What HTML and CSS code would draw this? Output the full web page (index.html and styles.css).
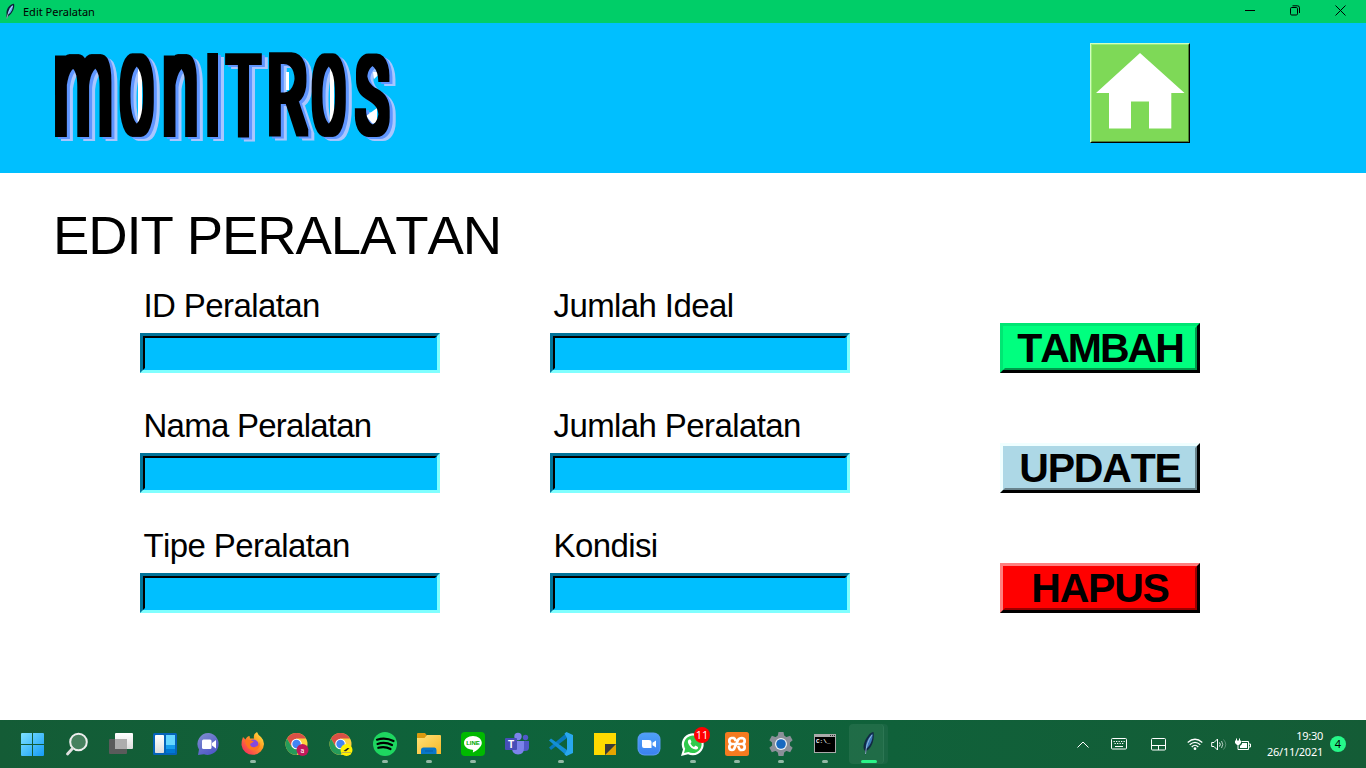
FILE: index.html
```html
<!DOCTYPE html>
<html lang="id">
<head>
<meta charset="utf-8">
<title>Edit Peralatan</title>
<link rel="stylesheet" href="styles.css">
</head>
<body>
<div class="window">
  <div class="titlebar">
    <svg class="feather" width="10" height="17" viewBox="0 0 10 17"><path d="M1.600 16 1.500 11C1 6 5 1 9 .8 10 4 8 10 3.500 13Z" fill="#0c2036"/><path d="M3 10.500C3.500 6.500 5.500 3.500 8 2 8 6 6.500 9 4 11Z" fill="#67a8ef"/><path d="M1.800 15.500C3 10 5 6 7.500 3" stroke="#dceaff" stroke-width=".7" fill="none"/></svg>
    <span class="title">Edit Peralatan</span>
    <div class="controls">
      <svg width="10" height="11" viewBox="0 0 10 11"><path d="M0 5.500H10" stroke="#000"/></svg>
      <svg width="10" height="11" viewBox="0 0 10 11" fill="none" stroke="#000"><rect x=".5" y="2.500" width="7" height="7.500" rx="1.200"/><path d="M2.500 .8H7.500Q9.500 .8 9.500 2.800V8"/></svg>
      <svg width="11" height="11" viewBox="0 0 11 11"><path d="M.5.5 10.500 10.500M10.500.5 .5 10.500" stroke="#000"/></svg>
    </div>
  </div>
  <header class="header">
    <svg class="logo" width="350" height="100" viewBox="50 47 350 100" role="img" aria-label="MONITROS">
      <defs>
        <filter id="heavy" filterUnits="userSpaceOnUse" x="40" y="40" width="370" height="110" color-interpolation-filters="sRGB"><feMorphology operator="dilate" radius="4 3"/></filter>
        <g id="word" filter="url(#heavy)">
          <text transform="translate(54.300 134.300) scale(.652 1.430)">m</text>
          <text transform="translate(120.800 133.300) scale(.472 1.060)">O</text>
          <text transform="translate(163 134.300) scale(.627 1.430)">n</text>
          <text transform="translate(206.400 134.300) scale(.460 1.090)">I</text>
          <text transform="translate(227.800 134.300) scale(.526 1.090)">T</text>
          <text transform="translate(267.400 134.300) scale(.623 1.090)">R</text>
          <text transform="translate(312.800 133.300) scale(.472 1.060)">O</text>
          <text transform="translate(356.600 133.300) scale(.528 1.060)">S</text>
        </g>
      </defs>
      <use href="#word" x="6" y="4" fill="#a9c6ff"/>
      <use href="#word" x="3" y="2" fill="#5f95ff"/>
      <g fill="#fff"><rect x="138" y="67" width="4" height="57"/><rect x="286" y="72" width="3" height="18"/><rect x="330" y="67" width="4" height="57"/><path d="M373 72H378L386 68 374 79ZM366 116 377 108V123H372Z"/></g>
      <use href="#word" fill="#000"/>
    </svg>
    <button class="home" aria-label="Home"><span class="home-face"><svg width="96" height="96" viewBox="1092 45 96 96"><path fill="#fff" d="M1140 53 1184.500 93H1171.300V128.500H1149V101.500H1131V128.500H1109V93H1096Z"/></svg></span></button>
  </header>
  <main class="content">
    <h1>EDIT PERALATAN</h1>
    <div class="form">
      <label class="field">ID Peralatan<span class="entry"></span></label>
      <label class="field">Jumlah Ideal<span class="entry"></span></label>
      <button class="btn add"><span>TAMBAH</span></button>
      <label class="field name">Nama Peralatan<span class="entry"></span></label>
      <label class="field">Jumlah Peralatan<span class="entry"></span></label>
      <button class="btn update"><span>UPDATE</span></button>
      <label class="field">Tipe Peralatan<span class="entry"></span></label>
      <label class="field">Kondisi<span class="entry"></span></label>
      <button class="btn delete"><span>HAPUS</span></button>
    </div>
  </main>
</div>
<footer class="taskbar">
  <svg width="0" height="0" class="defs"><defs>
    <linearGradient id="win" x2="1" y2="1"><stop stop-color="#7ee2ff"/><stop offset="1" stop-color="#159cf5"/></linearGradient>
    <linearGradient id="gray" x2="0" y2="1"><stop stop-color="#fff"/><stop offset="1" stop-color="#ddd"/></linearGradient>
    <linearGradient id="chat" x2=".6" y2="1"><stop stop-color="#8290cf"/><stop offset="1" stop-color="#5059c9"/></linearGradient>
    <linearGradient id="fox" x1="1" x2="0" y2="1"><stop stop-color="#fff44f"/><stop offset=".4" stop-color="#ff9a20"/><stop offset="1" stop-color="#f5156c"/></linearGradient>
    <linearGradient id="fold" x2="1" y2="1"><stop stop-color="#ffe27a"/><stop offset="1" stop-color="#f8b826"/></linearGradient>
    <linearGradient id="zoomy" x2="0" y2="1"><stop stop-color="#4ea0f8"/><stop offset="1" stop-color="#3b82f0"/></linearGradient>
    <g id="chrome"><circle cx="11.500" cy="12" r="11" fill="#ffd23e"/><path d="M2 6.500A11 11 0 0 1 21 6.500H11.500L6.700 14.700Z" fill="#d95046"/><path d="M2 6.500A11 11 0 0 0 11.500 23L16.200 14.800 11.500 17 6.700 14.700Z" fill="#259b5a"/><circle cx="11.500" cy="12" r="5.300" fill="#fff"/><circle cx="11.500" cy="12" r="4.200" fill="#4285f4"/></g>
  </defs></svg>
  <div class="apps">
    <div class="app"><svg viewBox="0 0 24 24"><path fill="url(#win)" d="M0 2Q0 1 1 1H11V12H0ZM12 1H22Q23 1 23 2V12H12ZM0 13H11V24H1Q0 24 0 23ZM12 13H23V23Q23 24 22 24H12Z"/></svg></div>
    <div class="app"><svg viewBox="0 0 24 24"><circle cx="13.500" cy="10" r="8.300" fill="#47815f" stroke="#eee" stroke-width="2"/><path d="M7.500 16.500 2.500 22" stroke="#e0e0e0" stroke-width="2.800" stroke-linecap="round"/></svg></div>
    <div class="app"><svg viewBox="0 0 24 24"><rect x="6" y="1" width="18" height="16" rx="1" fill="url(#gray)"/><rect y="7" width="18" height="15" rx="1" fill="#5a5b5b"/><path d="M6 7H18V17H6Z" fill="#adadad"/></svg></div>
    <div class="app"><svg viewBox="0 0 24 24"><rect y="1" width="24" height="22" rx="1.500" fill="#0563b9"/><rect x="2" y="3" width="9" height="18" rx=".8" fill="url(#gray)"/><path fill="#66d7ff" d="M13 3h9v10h-9z"/><path fill="#159dec" d="M13 13h9v4h-9z"/><path fill="#0078d4" d="M13 17h9v4h-9z"/></svg></div>
    <div class="app"><svg viewBox="0 0 24 24"><path d="M12 1A11 11 0 1 1 7 22.300L1 23 2 17.500A11 11 0 0 1 12 1Z" fill="url(#chat)"/><rect x="5" y="7.500" width="9.500" height="9.500" rx="1.500" fill="#fff"/><path d="m15 11 4-3v8.500l-4-3z" fill="#fff"/></svg></div>
    <div class="app run"><svg viewBox="0 0 24 24"><path d="M2 5 4.500 7.500Q6 4 8.500 4L9 6.500 13 6.500Q12 2 16 0 17 3 20 5 23 8 23 12A11.300 11.300 0 0 1 .5 13Q.5 8 2 5Z" fill="url(#fox)"/><circle cx="12.500" cy="12.500" r="5" fill="#8548df"/><path d="M4 8Q9 7 13 9.500L9 12Q10 16 14 15 18 14 18 10 20 14 17 17 12 20 7 16Q4 12 4 8Z" fill="#ff751d"/></svg></div>
    <div class="app"><svg viewBox="0 0 24 24"><use href="#chrome"/><circle cx="17.500" cy="18" r="6" fill="#c2185b"/><text x="17.500" y="20.500" class="avatar">a</text></svg></div>
    <div class="app"><svg viewBox="0 0 24 24"><use href="#chrome"/><circle cx="17.500" cy="18" r="6" fill="#fff200"/><path d="m14.500 19 4-3 2 .2-3.500 3z" fill="#222"/><path d="M13 20.500h9" stroke="#888" stroke-width=".6"/></svg></div>
    <div class="app run"><svg viewBox="0 0 24 24"><circle cx="12" cy="12" r="12" fill="#1ed760"/><path d="M4 7.700Q12.500 5 20.500 9M4.500 12Q12 9.500 19 13M5.300 15.800Q12 14 17.500 17" fill="none" stroke="#000" stroke-width="2.200" stroke-linecap="round"/></svg></div>
    <div class="app run"><svg viewBox="0 0 24 24"><path d="M0 2Q0 1 1 1H8L10 3.500V7H0Z" fill="#dc9a0f"/><path d="M0 6H7.500L10 3H23Q24 3 24 4V22H0Z" fill="url(#fold)"/><path d="M4 22V18Q4 15.500 6.500 15.500H17.500Q19.500 15.500 19.500 18V22Z" fill="#0877c9"/><path d="M8 19h8" stroke="#075da5"/></svg></div>
    <div class="app run"><svg viewBox="0 0 24 24"><rect width="24" height="24" rx="4" fill="#00b900"/><path d="M12 4C17 4 20.800 7 20.800 11 20.800 15 15 19 12 20.500 11.500 20 13 18 11.500 17.800 6.500 17.500 3 14.500 3 11 3 7 7 4 12 4Z" fill="#fff"/><text x="12" y="13" class="line-label">LINE</text></svg></div>
    <div class="app"><svg viewBox="0 0 24 24"><circle cx="20.500" cy="5.500" r="2.700" fill="#5059c9"/><circle cx="13" cy="4.500" r="3.700" fill="#7b83eb"/><path d="M16 9H24V15.500Q24 19 20 19H16Z" fill="#5059c9"/><path d="M7 9H19V16Q19 22.500 13 22.500 7 22 7 16Z" fill="#7b83eb"/><rect y="6" width="12" height="12" rx="1" fill="#464eb8"/><text x="6" y="15.500" class="teams-label">T</text></svg></div>
    <div class="app run"><svg viewBox="0 0 24 24"><path d="M17.500 1 0 15.500 2 18 18 6Z" fill="#0879bd"/><path d="M17.500 23.500 0 8.500 2 6.500 18 18Z" fill="#148fd6"/><path d="M17.500 0 24 3V21L17.500 24 15.500 22.500 18 18V6L15.500 1.500Z" fill="#29a8ef"/></svg></div>
    <div class="app"><svg viewBox="0 0 24 24"><path d="M1 1H23V12L12 23H1Z" fill="#ffda00"/><path d="M12 23H23V12Z" fill="#e5a500"/><path d="M12 12H23L12 23Z" fill="#3b3a38"/></svg></div>
    <div class="app"><svg viewBox="0 0 24 24"><rect x=".5" y=".5" width="23" height="23" rx="7" fill="#599aef"/><rect x="1.500" y="1.500" width="21" height="21" rx="6" fill="url(#zoomy)"/><path d="M5 8H12Q14.500 8 14.500 10V16H7Q5 16 5 14ZM15.500 10.800 19 8.500V15.500L15.500 13.200Z" fill="#fff"/></svg></div>
    <div class="app run"><svg viewBox="0 0 24 24"><path d="M0 24 2 17.500A11 11 0 1 1 7 22.300Z" fill="#fff"/><path d="m3 21 1.200-4.200a8.800 8.800 0 1 1 3.300 3.200z" fill="#2fca4c"/><path d="M8 7.500Q6 9 7.500 12 10 17 15 17.500 17.500 17 17 15L14.500 13.500 13 15Q10.500 14 9.500 11.500L10.500 10 9.500 7.500Z" fill="#fff"/></svg><span class="count">11</span></div>
    <div class="app run"><svg viewBox="0 0 24 24"><rect width="24" height="24" rx="2.500" fill="#f57b20"/><path d="M9.500 6H6.500Q4.300 6.200 4.300 9 4.300 11.600 7 12 4.300 12.400 4.300 15 4.300 18 7 18 9 18 9.500 16L13 8Q14 6 17 6 19.700 6.200 19.700 9 19.700 11.600 17 12 19.700 12.400 19.700 15 19.700 18 17 18H14.500M7 12H17M9 6 11 9M13 14 15 18" fill="none" stroke="#fff" stroke-width="2.700"/></svg></div>
    <div class="app run"><svg viewBox="0 0 24 24"><g fill="#8b9099"><circle cx="12" cy="12" r="9"/><path id="tooth" d="M9.500 0H14.500L15.500 5H8.500ZM9.500 24H14.500L15.500 19H8.500Z"/><use href="#tooth" transform="rotate(60 12 12)"/><use href="#tooth" transform="rotate(120 12 12)"/></g><circle cx="12" cy="12" r="6" fill="#eef3f7"/><circle cx="12" cy="12" r="4.800" fill="#1769c0"/></svg></div>
    <div class="app run"><svg viewBox="0 0 24 24"><rect x="1" y="2" width="22" height="19" fill="#aaa"/><rect x="2" y="5" width="20" height="15" fill="#000"/><path d="M17 3.500h5" stroke="#333" stroke-dasharray="1 1"/><text x="3" y="10.500" class="cmd-label">C:\_</text></svg></div>
    <div class="app active"><svg viewBox="0 0 24 24"><path d="M9 23 9 19C6 16 8 9 12 4 14 1 16 0 17.500 0 18.500 6 17 15 10.500 19Z" fill="#102944"/><path d="M10 17C9 12 12 6 16.500 1.500 17 7 15 13 10 17Z" fill="#3b76b8"/><path d="M9.500 22C10 15 12 8 16 3" stroke="#b8d5ef" stroke-width=".7" fill="none"/></svg></div>
  </div>
  <div class="tray">
    <svg class="chev" width="12" height="7" viewBox="0 0 12 7"><path d="M.5 6.500 6 1 11.500 6.500"/></svg>
    <svg class="kbd" width="16" height="12" viewBox="0 0 16 12"><rect x=".5" y=".5" width="15" height="10.500" rx="1"/><path d="M2.500 3.500H14M3.500 5.500H13" stroke-dasharray="1.300 1.200"/><path d="M4 8.500H12"/></svg>
    <svg class="pad" width="15" height="13" viewBox="0 0 15 13"><rect x=".5" y=".5" width="14" height="11.500" rx="1"/><path d="M.5 7.500H14.500M7.500 7.500V12"/></svg>
    <svg class="wifi" width="16" height="13" viewBox="0 0 16 13"><path stroke-width="1.200" d="M.7 4.500Q8-2 15.300 4.500M2.700 6.800Q8 1.800 13.300 6.800M4.700 9Q8 5.500 11.300 9"/><circle cx="8" cy="10.700" r="1.400" fill="#fff" stroke="none"/></svg>
    <svg class="vol" width="16" height="13" viewBox="0 0 16 13"><path d="M.7 4.500H3L6.500 1V12L3 8.500H.7ZM8.500 4.500Q10 6.500 8.500 8.500"/><path d="M10.500 3Q13 6.500 10.500 10" opacity=".7"/><path d="M12.500 1.500Q17 6.500 12.500 11.500" opacity=".3"/></svg>
    <svg class="bat" width="16" height="13" viewBox="0 0 16 13"><path d="M1.500 .5V3M4.500 .5V3M3 6V11.500H13.500V3.500H6.500M14 6H15.500V9H14"/><path fill="#fff" stroke="none" d="M0 2.500h6V5L4 7H2L0 5zM7 5h5v5H5V8l2-2z"/></svg>
    <div class="clock"><span>19:30</span><span>26/11/2021</span></div>
    <span class="notice">4</span>
  </div>
</footer>
</body>
</html>
```
FILE: styles.css
```css
*, *::before, *::after { box-sizing: border-box; }
body {
  margin: 0;
  width: 1366px;
  height: 768px;
  overflow: hidden;
  display: flex;
  flex-direction: column;
  background: #fff;
  color: #000;
  font-family: "Liberation Sans", Arial, sans-serif;
}
button { margin: 0; padding: 0; font-family: inherit; color: #000; }
.window { height: 720px; }

.titlebar { height: 23px; display: flex; align-items: center; padding-left: 5px; background: #00ce68; }
.title { margin-left: 8px; font: 11px/22px "Noto Sans", sans-serif; letter-spacing: 0; }
.controls { display: flex; gap: 35px; margin-left: auto; padding: 0 20px 3px 0; }

.header {
  height: 150px;
  display: flex;
  justify-content: space-between;
  align-items: flex-start;
  padding: 20px 176px 0 50px;
  background: #00bfff;
}
.logo { margin-top: 4px; font: 300 100px Roboto, sans-serif; }
.home { display: flex; width: 100px; height: 100px; border: 1px solid; border-color: #d2ffbf #000 #000 #d2ffbf; background: #7ed957; }
.home-face { display: flex; width: 98px; height: 98px; border: 1px solid; border-color: #9bea7a #4c8235 #4c8235 #9bea7a; }

.content { padding: 32px 0 0 53px; }
h1 { margin: 0; font-size: 54.500px; line-height: 62px; font-weight: 400; letter-spacing: -1.100px; font-kerning: none; }
.form {
  display: grid;
  grid-template-columns: 300px 300px 200px;
  grid-template-rows: repeat(3, 88px);
  column-gap: 110px;
  row-gap: 32px;
  padding: 18px 0 0 87px;
}
.form > :nth-child(3n) { margin-left: 40px; }
.field { display: flex; flex-direction: column; height: 88px; text-indent: 3.500px; font-size: 33px; line-height: 41px; letter-spacing: -.600px; white-space: nowrap; font-kerning: none; }
.name { letter-spacing: -.750px; }
.entry { display: block; height: 40px; margin-top: 7px; border: 3px solid; border-color: #007399 #80ffff #80ffff #007399; background: #00bfff; }
.entry::before { content: ""; display: block; height: 34px; border: 2px solid; border-color: #000 #00bfff #00bfff #000; }
.btn { display: flex; width: 200px; height: 50px; align-self: end; border: 3px solid; font-size: 41px; font-weight: 700; line-height: 40px; letter-spacing: -1.200px; font-kerning: none; }
.btn span { flex: 1; height: 44px; border: 2px solid; }
.add { background: #00ff7f; border-color: #00e673 #000 #000 #00e673; letter-spacing: -2px; }
.add span { border-color: #00ff7f #00994c #00994c #00ff7f; }
.update { background: #add8e6; border-color: #f0ffff #000 #000 #f0ffff; }
.update span { border-color: #add8e6 #68828a #68828a #add8e6; }
.delete { background: #f00; border-color: #ff8080 #000 #000 #ff8080; }
.delete span { border-color: #f00 #990000 #990000 #f00; }

.taskbar { height: 48px; display: flex; justify-content: space-between; background: linear-gradient(90deg, #145c36, #0e633b 35%, #10613a 65%, #145c36); }
.defs { position: absolute; }
.apps { display: flex; padding-left: 11px; }
.app { position: relative; width: 44px; height: 48px; padding: 12px 10px; }
.app svg { display: block; width: 24px; height: 24px; overflow: visible; }
.run::after { content: ""; position: absolute; left: 19px; bottom: 5px; width: 6px; height: 3px; border-radius: 2px; background: #91b9a5; }
.active::before { content: ""; position: absolute; inset: 4px auto 4px 2px; width: 35px; border-radius: 4px; border-right: 1px solid #2c7653; background: rgba(255,255,255,.07); box-shadow: 4px 0 0 #1a6643; }
.app.active svg { position: relative; left: -1px; }
.active::after { content: ""; position: absolute; left: 14px; bottom: 5px; width: 16px; height: 3px; border-radius: 2px; background: #28f587; }
.count { position: absolute; top: 7px; left: 23px; width: 16px; height: 16px; border-radius: 50%; background: #f00; color: #fff; text-align: center; font: 11px/16px "Open Sans", sans-serif; }
.avatar { font: 7px Roboto, sans-serif; fill: #fff; text-anchor: middle; }
.line-label { font: bold 6px "Liberation Sans", sans-serif; fill: #00a800; text-anchor: middle; }
.teams-label { font: bold 10px "Liberation Sans", sans-serif; fill: #fff; text-anchor: middle; }
.cmd-label { font: bold 6px "Liberation Mono", monospace; fill: #fff; }

.tray { display: flex; align-items: center; padding-right: 20px; }
.tray svg { fill: none; stroke: #fff; stroke-width: 1; }
.kbd { margin-left: 22px; }
.pad { margin-left: 24px; }
.wifi { margin-left: 21px; }
.vol, .bat { margin-left: 8px; }
.clock { width: 72px; display: flex; flex-direction: column; align-items: flex-end; color: #fff; font: 11px/16px "Noto Sans", sans-serif; letter-spacing: -.25px; }
.notice { width: 16px; height: 16px; margin-left: 7px; border-radius: 50%; background: #26f889; text-align: center; font: 11px/16px "Noto Sans", sans-serif; }
```
